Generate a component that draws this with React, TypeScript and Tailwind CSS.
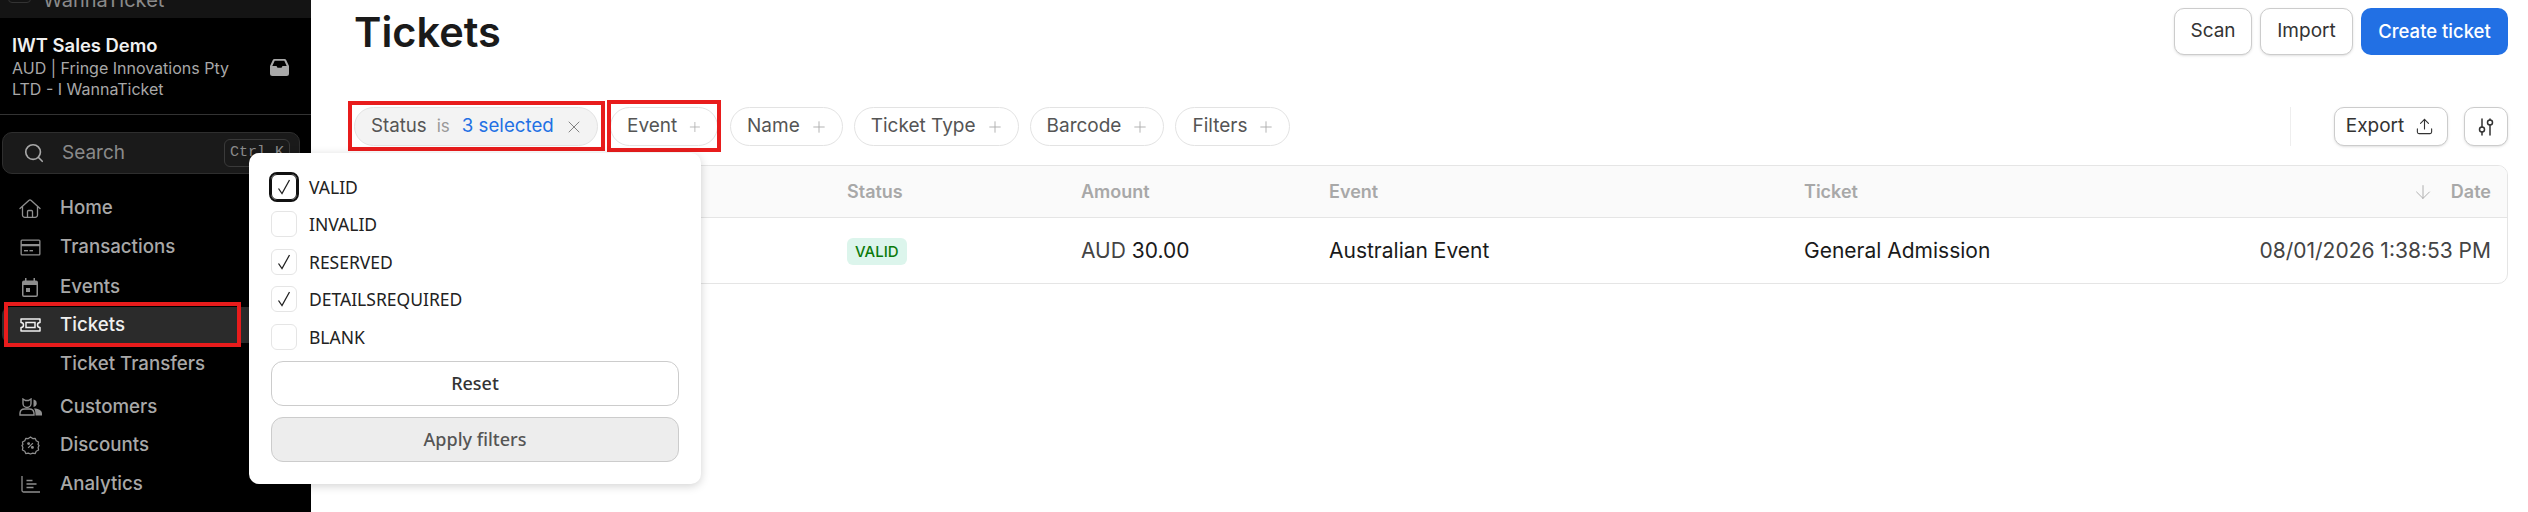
import { ArrowDown, Plus, Search, Upload, X } from 'lucide-react'
import type { ReactNode } from 'react'

const inter = 'font-["Inter",sans-serif]'

function HomeIcon() {
  return (
    <svg width="22" height="19" viewBox="0 0 22 19" fill="none" stroke="currentColor" strokeWidth="1.3">
      <path d="M1 9.500 9.800 1.400a1.800 1.800 0 0 1 2.400 0L21 9.500" strokeLinecap="round" strokeLinejoin="round" />
      <path d="M3.500 7.500V16a2.300 2.300 0 0 0 2.300 2.300h10.400A2.300 2.300 0 0 0 18.500 16V7.500" />
      <path d="M8.500 18.300V12.500a1 1 0 0 1 1-1h3a1 1 0 0 1 1 1v5.800" />
    </svg>
  )
}

function CardIcon() {
  return (
    <svg width="21" height="17" viewBox="0 0 21 17" fill="currentColor">
      <path fillRule="evenodd" d="M2 .500h17A1.500 1.500 0 0 1 20.500 2v13a1.500 1.500 0 0 1-1.500 1.500H2A1.500 1.500 0 0 1 .5 15V2A1.500 1.500 0 0 1 2 .5Zm-.2 1.300V5h17.400V1.800H1.800Zm0 5.500v7.900h17.400V7.300H1.800Z" />
      <rect x="4" y="11" width="4" height="1.400" />
      <rect x="9.500" y="11" width="3.500" height="1.400" />
    </svg>
  )
}

function CalendarIcon() {
  return (
    <svg width="16" height="19" viewBox="0 0 16 19" fill="currentColor">
      <path fillRule="evenodd" d="M3 0h1.500v2.500h7V0H13v2.500h1A2 2 0 0 1 16 4.500V17a2 2 0 0 1-2 2H2a2 2 0 0 1-2-2V4.500a2 2 0 0 1 2-2h1V0ZM1.500 7v10a.5.5 0 0 0 .5.5h12a.5.5 0 0 0 .5-.5V7h-13Z" />
      <rect x="4" y="10" width="4" height="4" />
    </svg>
  )
}

function TicketIcon() {
  return (
    <svg width="21" height="14" viewBox="0 0 21 14" fill="none" stroke="currentColor" strokeWidth="1.500">
      <path d="M1 1h19v3.500a2.500 2.500 0 0 0 0 5V13H1V9.500a2.500 2.500 0 0 0 0-5V1Z" strokeLinejoin="round" />
      <rect x="6" y="4.500" width="9" height="5" />
    </svg>
  )
}

function CustomersIcon() {
  return (
    <svg width="23" height="18" viewBox="0 0 23 18" fill="none" stroke="currentColor" strokeWidth="1.400">
      <path d="M4 1 6.500 2.500h3L12 1v4.500a4 4 0 0 1-8 0V1Z" />
      <path d="M1 17v-2a4.500 4.500 0 0 1 4.500-4h5a4.500 4.500 0 0 1 4.500 4v2H1Z" />
      <path d="M14.500 1.500a3.800 3.800 0 0 1 0 7.500Z" fill="currentColor" stroke="none" />
      <path d="M15 10.500c4 0 8 1.500 8 5v2h-6.500c0-3-.200-5-1.500-7Z" fill="currentColor" stroke="none" />
    </svg>
  )
}

function DiscountIcon() {
  return (
    <svg width="19" height="19" viewBox="0 0 20 20" fill="none" stroke="currentColor" strokeWidth="1.300">
      <path d="M10 1 12.300 2.700 15 2.500 16 5 18.500 6.300 18 9 19 10 18 12 18.500 14.700 16 16 15 18.500 12.300 18 10 19 7.700 18 5 18.500 4 16 1.500 14.700 2 12 1 10 2 9 1.500 6.300 4 5 5 2.500 7.700 2.700Z" strokeLinejoin="round" />
      <path d="M12.500 7.500 7.500 12.500" />
      <circle cx="8" cy="8" r=".9" fill="currentColor" />
      <circle cx="12" cy="12" r=".9" fill="currentColor" />
    </svg>
  )
}

function AnalyticsIcon() {
  return (
    <svg width="19" height="17" viewBox="0 0 19 17" fill="none" stroke="currentColor" strokeWidth="1.300">
      <path d="M1 0v14.500A1.500 1.500 0 0 0 2.500 16H19" />
      <path d="M5.500 4.500h6M5.500 8h10M5.500 11.500h7" />
    </svg>
  )
}

function InboxIcon() {
  return (
    <svg width="19" height="17" viewBox="0 0 19 17" fill="currentColor">
      <path fillRule="evenodd" d="M4.500 0h10a2 2 0 0 1 1.800 1.200L19 7v7.500a2.500 2.500 0 0 1-2.500 2.500h-14A2.500 2.500 0 0 1 0 14.500V7l2.700-5.800A2 2 0 0 1 4.500 0Zm.2 1.700L2.300 7H6.500l1 1.800h4l1-1.800h4.200l-2.400-5.300H4.700Z" />
    </svg>
  )
}

function SlidersIcon() {
  return (
    <svg width="18" height="20" viewBox="0 0 18 20" fill="none" stroke="currentColor" strokeWidth="1.500" strokeLinecap="round">
      <path d="M5 2v8M5 15v3M13 2v1M13 8v10" />
      <circle cx="5" cy="12.500" r="2.500" />
      <circle cx="13" cy="5.500" r="2.500" />
    </svg>
  )
}

function NavItem({ icon, label, active, className }: { icon?: ReactNode; label: string; active?: boolean; className?: string }) {
  return (
    <div
      className={`relative ml-[2px] flex h-[36px] items-center ${className ?? ''} ${
        active ? 'rounded-l-lg bg-[#2b2b2b] text-[#f0f0f0]' : 'text-[#a8a8a8]'
      }`}
    >
      <span className={`flex w-[56px] items-center justify-center ${active ? '' : 'text-[#8f8f8f]'}`}>{icon}</span>
      <span className="ml-[2px] text-[18.700px] font-medium">{label}</span>
      {active && <span className="absolute top-[-5px] bottom-[-4px] left-[2px] w-[237px] border-[4px] border-[#e81c1c]" />}
    </div>
  )
}

function FilterPill({ label, className }: { label: string; className?: string }) {
  return (
    <div className={`flex h-[39px] items-center gap-[10px] rounded-full border border-[#e3e3e3] bg-white pr-[14px] pl-[16px] text-[19px] text-[#555] ${className ?? ''}`}>
      {label}
      <Plus size={18} strokeWidth={1.200} className="text-[#aaa]" />
    </div>
  )
}

function OptionRow({ label, checked, focused }: { label: string; checked?: boolean; focused?: boolean }) {
  return (
    <div className="flex h-[37.500px] items-center gap-[12px]">
      <span
        className={`flex h-[26px] w-[26px] items-center justify-center rounded-[6px] bg-white ${
          focused ? 'border border-[#111] outline-2 outline-[#111]' : 'border border-[#e5e5e5]'
        }`}
      >
        {checked && (
          <svg width="14" height="16" viewBox="0 0 14 16" fill="none" stroke="#222" strokeWidth="1.300">
            <path d="M1.500 9.500 5 14.500 12.500 1" />
          </svg>
        )}
      </span>
      <span className="text-[17.500px] text-[#222]">{label}</span>
    </div>
  )
}

export default function App() {
  return (
    <div className={`relative flex h-[512px] w-[2528px] overflow-hidden bg-white ${inter}`}>
      {/* Sidebar */}
      <aside className="h-full w-[311px] shrink-0 overflow-hidden bg-black">
        <div className="flex h-[18px] items-start gap-[12px] overflow-hidden bg-[#141414] pl-[8px]">
          <span className="h-[24px] w-[23px] -translate-y-[21px] rounded-[4px] border border-[#333]" />
          <span className="-translate-y-[12px] text-[20px] leading-[24px] text-[#8a8a8a]">WannaTicket</span>
        </div>
        <div className="flex h-[97px] items-center justify-between border-b border-[#333] pr-[22px] pl-[12px]">
          <div className="w-[240px]">
            <div className="text-[18.400px] leading-[26px] font-semibold text-[#f0f0f0]">IWT Sales Demo</div>
            <div className="text-[16px] leading-[21px] text-[#a8a8a8]">AUD | Fringe Innovations Pty</div>
            <div className="text-[16px] leading-[21px] text-[#a8a8a8]">LTD - I WannaTicket</div>
          </div>
          <span className="translate-y-[1px] text-[#a8a8a8]"><InboxIcon /></span>
        </div>
        <div className="mx-[2px] mt-[17px] flex h-[42px] w-[298px] items-center rounded-[10px] border border-[#2e2e2e] bg-[#1a1a1a] pr-[9px] pl-[20px]">
          <Search size={22} strokeWidth={1.800} className="text-[#a8a8a8]" />
          <span className="ml-[17px] flex-1 text-[19px] text-[#8a8a8a]">Search</span>
          <span className="flex h-[28px] items-center rounded-[6px] border border-[#3a3a3a] px-[5px] font-['Liberation_Mono',monospace] text-[15px] text-[#8a8a8a]">Ctrl K</span>
        </div>
        <nav className="mt-[16px]">
          <NavItem icon={<HomeIcon />} label="Home" />
          <NavItem icon={<CardIcon />} label="Transactions" className="mt-[3px]" />
          <NavItem icon={<CalendarIcon />} label="Events" className="mt-[4px]" />
          <NavItem icon={<TicketIcon />} label="Tickets" active className="mt-[2px]" />
          <NavItem label="Ticket Transfers" className="mt-[3px]" />
          <NavItem icon={<CustomersIcon />} label="Customers" className="mt-[7px]" />
          <NavItem icon={<DiscountIcon />} label="Discounts" className="mt-[2px]" />
          <NavItem icon={<AnalyticsIcon />} label="Analytics" className="mt-[3px]" />
        </nav>
      </aside>

      {/* Main */}
      <main className="flex min-w-0 flex-1 flex-col pr-[20px] pl-[43px]">
        <header className="flex h-[58px] items-start justify-between">
          <h1 className="text-[41.500px] leading-[64px] font-semibold text-[#1a1a1a]">Tickets</h1>
          <div className="mt-[8px] flex gap-[8px]">
            <button className="h-[47px] w-[78px] rounded-[10px] border border-[#ccc] bg-white text-[19px] text-[#333] shadow-sm">Scan</button>
            <button className="h-[47px] w-[93px] rounded-[10px] border border-[#ccc] bg-white text-[19px] text-[#333] shadow-sm">Import</button>
            <button className="h-[47px] w-[147px] rounded-[10px] bg-[#2270e4] text-[18.500px] font-medium text-white">Create ticket</button>
          </div>
        </header>

        <div className="mt-[49px] flex h-[39px] items-center">
          <div className="relative flex h-[39px] w-[244px] items-center rounded-full border border-[#e3e3e3] bg-[#f3f3f3] pl-[16px] text-[18.700px]">
            <span className="text-[#555]">Status</span>
            <span className="ml-[10px] text-[17px] text-[#999]">is</span>
            <span className="ml-[12px] text-[#2270e4]">3 selected</span>
            <X size={20} strokeWidth={1.100} className="ml-[10px] text-[#777]" />
            <span className="absolute top-[-7px] right-[-8px] bottom-[-6px] left-[-7px] border-[4px] border-[#e81c1c]" />
          </div>
          <div className="relative ml-[12px] w-[108px]">
            <FilterPill label="Event" className="pr-0" />
            <span className="absolute top-[-7px] right-[-3px] bottom-[-6px] left-[-3px] border-[4px] border-[#e81c1c]" />
          </div>
          <FilterPill label="Name" className="ml-[12px]" />
          <FilterPill label="Ticket Type" className="ml-[11px]" />
          <FilterPill label="Barcode" className="ml-[11px]" />
          <FilterPill label="Filters" className="ml-[11px]" />
          <div className="ml-auto flex items-center">
            <span className="h-[39px] w-px bg-[#eee]" />
            <button className="ml-[43px] flex h-[39px] w-[114px] items-center justify-center gap-[11px] rounded-[10px] border border-[#ccc] bg-white pr-[2px] text-[19px] text-[#333] shadow-sm">
              Export <Upload size={19} strokeWidth={1.400} />
            </button>
            <button className="ml-[16px] flex h-[39px] w-[44px] items-center justify-center rounded-[10px] border border-[#ccc] bg-white text-[#333] shadow-sm">
              <SlidersIcon />
            </button>
          </div>
        </div>

        {/* Table */}
        <div className="mt-[19px] overflow-hidden rounded-[10px] border border-[#e5e5e5]">
          <div className="flex h-[52px] items-center border-b border-[#e5e5e5] bg-[#fafafa] text-[18px] font-semibold text-[#a8a8a8]">
            <span className="ml-[492px] w-[234px]">Status</span>
            <span className="w-[248px]">Amount</span>
            <span className="w-[475px]">Event</span>
            <span>Ticket</span>
            <span className="ml-auto flex items-center gap-[17px] pr-[16px]">
              <ArrowDown size={22} strokeWidth={1} /> Date
            </span>
          </div>
          <div className="flex h-[65px] items-center text-[21px] text-[#1a1a1a]">
            <span className="ml-[492px] w-[234px]">
              <span className="inline-flex h-[27px] -translate-y-px items-center rounded-[6px] bg-[#dcf5ec] px-[8px] text-[15px] font-medium text-[#0b7a0b]">VALID</span>
            </span>
            <span className="w-[248px]"><span className="text-[#444]">AUD</span> 30.00</span>
            <span className="w-[475px]">Australian Event</span>
            <span>General Admission</span>
            <span className="ml-auto pr-[16px] text-[#444]">08/01/2026 1:38:53 PM</span>
          </div>
        </div>
      </main>

      {/* Status filter popover */}
      <div className="absolute top-[153px] left-[249px] h-[331px] w-[452px] rounded-[10px] bg-white px-[22px] pt-[15px] font-['Noto_Sans',sans-serif] shadow-[0_2px_10px_rgba(0,0,0,0.18)]">
        <OptionRow label="VALID" checked focused />
        <OptionRow label="INVALID" />
        <OptionRow label="RESERVED" checked />
        <OptionRow label="DETAILSREQUIRED" checked />
        <OptionRow label="BLANK" />
        <button className="mt-[5px] h-[45px] w-full rounded-[12px] border border-[#ccc] bg-white text-[18px] font-medium text-[#333]">Reset</button>
        <button className="mt-[11px] h-[45px] w-full rounded-[12px] border border-[#ccc] bg-[#ededed] text-[18px] font-medium text-[#555]">Apply filters</button>
      </div>
    </div>
  )
}
